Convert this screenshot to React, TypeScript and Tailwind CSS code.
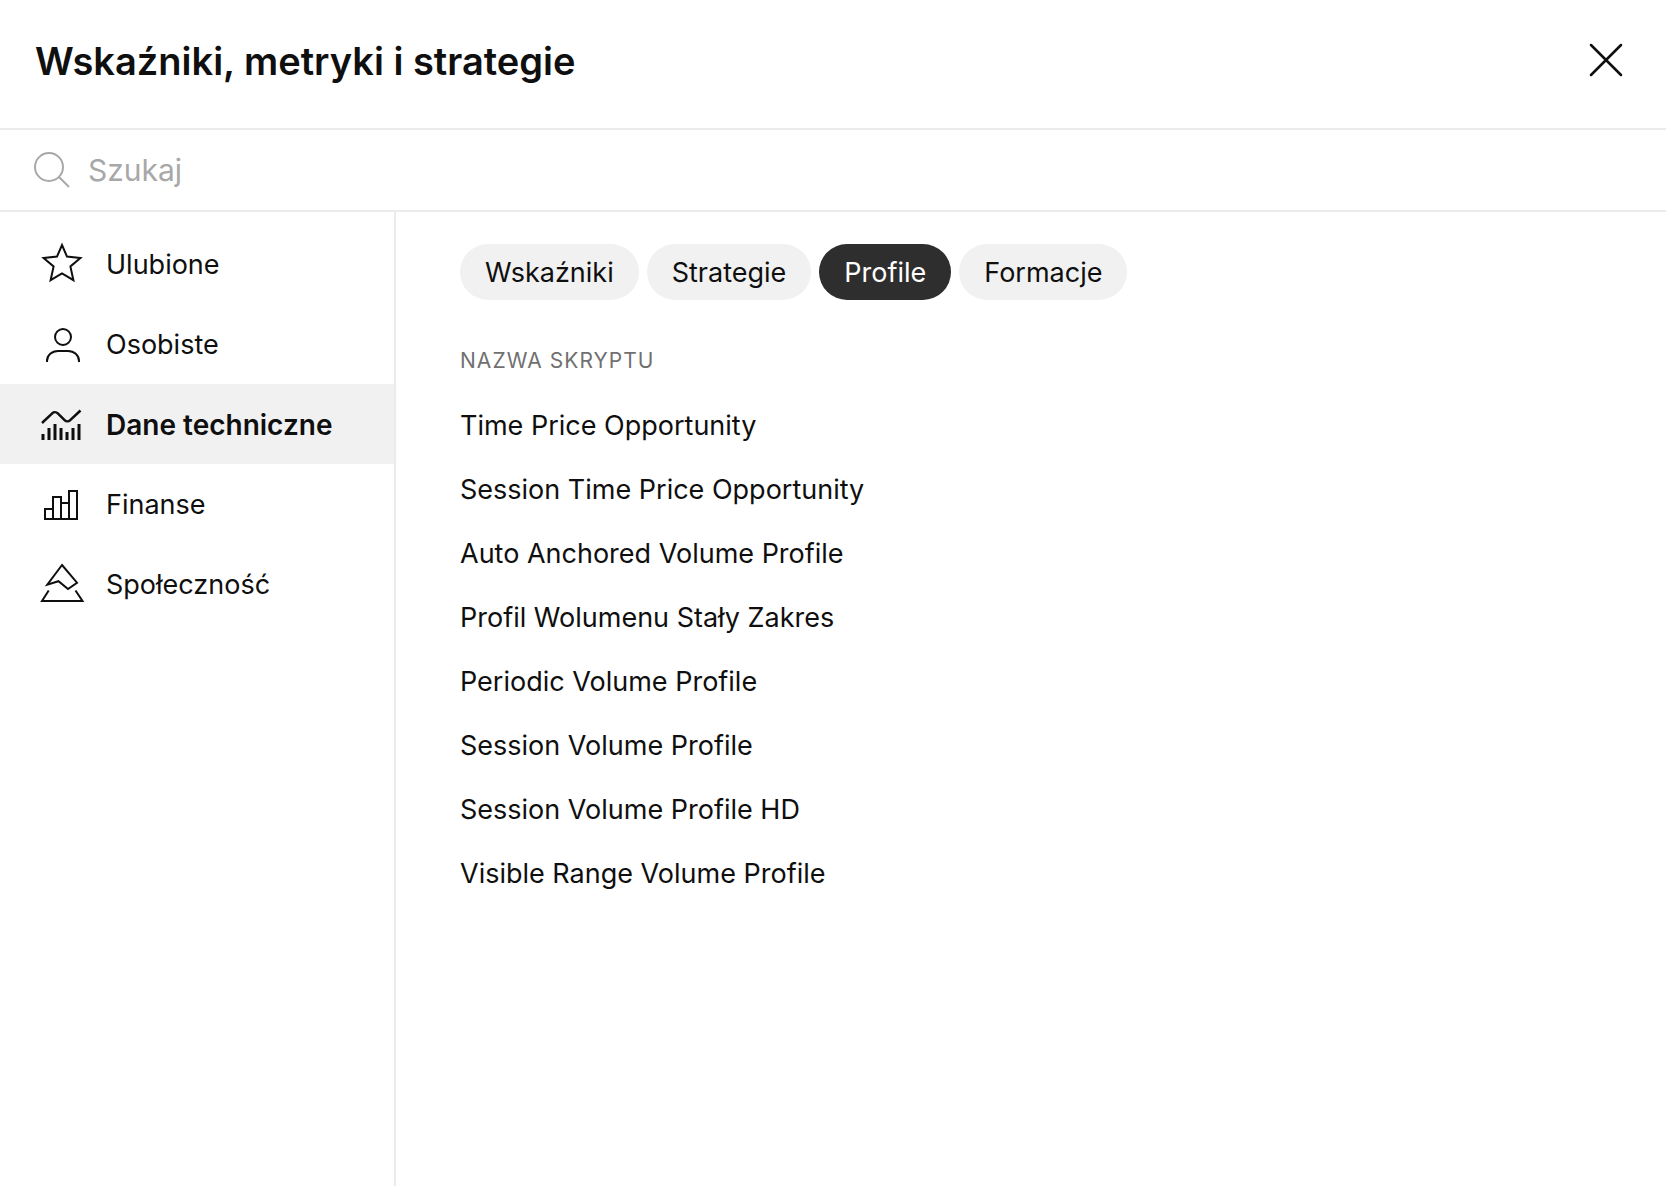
import { useState } from "react";
import type { ReactNode } from "react";
import clsx from "clsx";

interface IconProps {
  children: ReactNode;
}

function Icon({ children }: IconProps) {
  return (
    <svg
      className="h-14 w-14 shrink-0"
      viewBox="0 0 56 56"
      fill="none"
      stroke="currentColor"
      strokeWidth="2"
      aria-hidden="true"
    >
      {children}
    </svg>
  );
}

const categories = [
  {
    id: "favorites",
    label: "Ulubione",
    icon: (
      <Icon>
        <path d="M28 9L33 20.6L46.4 21.9L36.4 30.4L39.4 44.2L28 37.4L16.6 44.2L19.6 30.4L9.6 21.9L23 20.6Z" />
      </Icon>
    ),
  },
  {
    id: "personal",
    label: "Osobiste",
    icon: (
      <Icon>
        <circle cx="29" cy="21" r="8" />
        <path d="M13 46v-1c0-6 5-10 11-10h10c6 0 11 4 11 10v1" />
      </Icon>
    ),
  },
  {
    id: "technicals",
    label: "Dane techniczne",
    icon: (
      <Icon>
        <path
          d="M8 27L18.2 17.4a4 4 0 0 1 5.6 0L30.6 24.2a4 4 0 0 0 5.6 0L46.5 14.5"
          strokeWidth="2.5"
        />
        <path
          d="M9 44v-6M15 44V32M21 44V28M27 44V32M33 44v-8M39 44V32M45 44V28"
          strokeWidth="3"
        />
      </Icon>
    ),
  },
  {
    id: "financials",
    label: "Finanse",
    icon: (
      <Icon>
        <path d="M11 43V33h8v10M19 33V21h8v22M27 27h8M35 43V15h8v28M10 43h34" />
      </Icon>
    ),
  },
  {
    id: "community",
    label: "Społeczność",
    icon: (
      <Icon>
        <path d="M28 9L43 26.7L34 33L24.5 25.2L13.3 28.7Z" />
        <path d="M14.7 34.5L8 45h40.5L41.5 34.5" />
      </Icon>
    ),
  },
];

const tabs = ["Wskaźniki", "Strategie", "Profile", "Formacje"];

const scripts = [
  "Time Price Opportunity",
  "Session Time Price Opportunity",
  "Auto Anchored Volume Profile",
  "Profil Wolumenu Stały Zakres",
  "Periodic Volume Profile",
  "Session Volume Profile",
  "Session Volume Profile HD",
  "Visible Range Volume Profile",
];

export default function App() {
  const [category, setCategory] = useState("technicals");
  const [tab, setTab] = useState("Profile");
  const [query, setQuery] = useState("");

  return (
    <div className="flex min-h-screen flex-col bg-white font-['Inter',sans-serif] text-[27px] leading-8 text-[#0f0f0f]">
      <header className="flex h-[130px] items-start justify-between border-b-2 border-[#ebebeb] pt-8 pr-8 pl-[35px]">
        <h1 className="text-[38px] leading-[58px] font-semibold">
          Wskaźniki, metryki i strategie
        </h1>
        <button type="button" aria-label="Zamknij">
          <Icon>
            <path
              d="M13 13l30 30M43 13L13 43"
              strokeWidth="2.5"
              strokeLinecap="round"
            />
          </Icon>
        </button>
      </header>

      <label className="flex h-[82px] items-center gap-4 border-b-2 border-[#ebebeb] px-8">
        <svg
          className="h-10 w-10 shrink-0 text-[#a8a8a8]"
          viewBox="0 0 40 40"
          fill="none"
          stroke="currentColor"
          strokeWidth="2"
          aria-hidden="true"
        >
          <circle cx="17" cy="17" r="14" />
          <path d="M27 27l10 10" />
        </svg>
        <input
          type="text"
          aria-label="Szukaj"
          placeholder="Szukaj"
          className="h-full flex-1 text-[30px] outline-none placeholder:text-[#a8a8a8]"
          value={query}
          onChange={(e) => setQuery(e.target.value)}
        />
      </label>

      <div className="flex flex-1">
        <nav className="w-[396px] shrink-0 border-r-2 border-[#ebebeb] pt-3">
          {categories.map((item) => (
            <button
              key={item.id}
              type="button"
              className={clsx(
                "flex h-20 w-full items-center gap-4 pl-[34px] text-left",
                item.id === category && "bg-[#f1f1f1] text-[28px] font-semibold"
              )}
              onClick={() => setCategory(item.id)}
            >
              {item.icon}
              <span className="pt-0.5">{item.label}</span>
            </button>
          ))}
        </nav>

        <main className="flex-1 px-16 pt-8">
          <div className="flex gap-2">
            {tabs.map((name) => (
              <button
                key={name}
                type="button"
                className={clsx(
                  "h-14 rounded-full px-[25px] pt-0.5",
                  name === tab ? "bg-[#2e2e2e] text-white" : "bg-[#f1f1f1]"
                )}
                onClick={() => setTab(name)}
              >
                {name}
              </button>
            ))}
          </div>

          <h2 className="mt-[45px] text-[21px] leading-8 tracking-wider text-[#707070] uppercase">
            Nazwa skryptu
          </h2>
          <ul className="mt-4">
            {scripts.map((script) => (
              <li key={script} className="flex h-16 items-center pt-0.5">
                {script}
              </li>
            ))}
          </ul>
        </main>
      </div>
    </div>
  );
}
